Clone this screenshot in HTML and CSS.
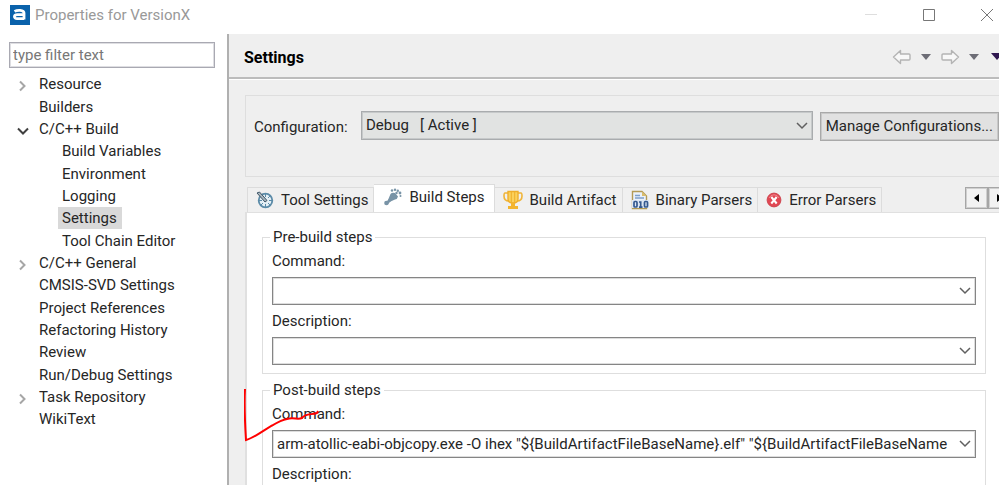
FILE: index.html
```html
<!DOCTYPE html>
<html lang="en">
<head>
<meta charset="utf-8">
<title>Properties for VersionX</title>
<link rel="stylesheet" href="styles.css">
</head>
<body>
<header class="titlebar">
  <svg class="app-icon" viewBox="0 0 20 20" aria-hidden="true">
    <rect width="20" height="20" fill="#0a62ab"/>
    <path d="M4.500 6.400C7 5 14 4.500 14 8V14.500M14 9.700H7.500C3.500 9.700 3.500 13.600 7 13.600H14" fill="none" stroke="#fff" stroke-width="2.800"/>
  </svg>
  <h1 class="window-title">Properties for VersionX</h1>
  <div class="window-buttons">
    <button type="button" class="window-button" aria-label="Minimize"><svg viewBox="0 0 14 14"><path d="M1 6.500H13" stroke="#dedede"/></svg></button>
    <button type="button" class="window-button" aria-label="Maximize"><svg viewBox="0 0 14 14"><path d="M1.500 1.500H12.500V12.500H1.500Z" fill="none" stroke="#777"/></svg></button>
    <button type="button" class="window-button" aria-label="Close"><svg viewBox="0 0 14 14"><path d="M1 1L13 13M13 1L1 13" stroke="#777"/></svg></button>
  </div>
</header>

<div class="dialog">
  <nav class="sidebar" aria-label="Property pages">
    <input class="filter" type="text" placeholder="type filter text" aria-label="Filter">
    <ul class="tree">
      <li class="node"><svg class="twisty" viewBox="0 0 12 12"><path d="M3 1.500L7.500 6L3 10.500"/></svg><a href="#">Resource</a></li>
      <li class="node"><a href="#">Builders</a></li>
      <li class="node"><svg class="twisty open" viewBox="0 0 12 12"><path d="M1 3.500L6 8.500L11 3.500"/></svg><a href="#">C/C++ Build</a></li>
      <li class="node child"><a href="#">Build Variables</a></li>
      <li class="node child"><a href="#">Environment</a></li>
      <li class="node child"><a href="#">Logging</a></li>
      <li class="node child"><a class="selected" href="#" aria-current="page">Settings</a></li>
      <li class="node child"><a href="#">Tool Chain Editor</a></li>
      <li class="node"><svg class="twisty" viewBox="0 0 12 12"><path d="M3 1.500L7.500 6L3 10.500"/></svg><a href="#">C/C++ General</a></li>
      <li class="node"><a href="#">CMSIS-SVD Settings</a></li>
      <li class="node"><a href="#">Project References</a></li>
      <li class="node"><a href="#">Refactoring History</a></li>
      <li class="node"><a href="#">Review</a></li>
      <li class="node"><a href="#">Run/Debug Settings</a></li>
      <li class="node"><svg class="twisty" viewBox="0 0 12 12"><path d="M3 1.500L7.500 6L3 10.500"/></svg><a href="#">Task Repository</a></li>
      <li class="node"><a href="#">WikiText</a></li>
    </ul>
  </nav>

  <main class="page">
    <div class="page-header">
      <h2 class="page-title">Settings</h2>
      <div class="history">
        <button type="button" class="tool" aria-label="Back"><svg width="20" height="16" viewBox="0 0 20 16"><path d="M1.500 8L8.500 1.500V5H17Q18 5 18 6V10Q18 11 17 11H8.500V14.500Z" fill="#f8f8f8" stroke="#b4b4b4" stroke-width="1.400" stroke-linejoin="round"/></svg></button>
        <button type="button" class="tool" aria-label="Back history"><svg width="10" height="6" viewBox="0 0 10 6"><path d="M0 0H10L5 6Z" fill="#6d6d76"/></svg></button>
        <button type="button" class="tool" aria-label="Forward"><svg width="20" height="16" viewBox="0 0 20 16"><path d="M18.500 8L11.500 1.500V5H3Q2 5 2 6V10Q2 11 3 11H11.500V14.500Z" fill="#f8f8f8" stroke="#b4b4b4" stroke-width="1.400" stroke-linejoin="round"/></svg></button>
        <button type="button" class="tool" aria-label="Forward history"><svg width="10" height="6" viewBox="0 0 10 6"><path d="M0 0H10L5 6Z" fill="#6d6d76"/></svg></button>
        <button type="button" class="tool view-menu" aria-label="View menu"><svg width="12" height="7" viewBox="0 0 12 7"><path d="M0 0H12L6 7Z" fill="#2f1750"/></svg></button>
      </div>
    </div>

    <div class="page-body">
      <section class="config">
        <label for="configuration">Configuration:</label>
        <div class="select-box">
          <select id="configuration"><option>Debug&nbsp;&nbsp; [ Active ]</option></select>
          <svg class="chevron" viewBox="0 0 12 8"><path d="M1 1L6 6L11 1"/></svg>
        </div>
        <button type="button" class="manage">Manage Configurations...</button>
      </section>

      <div class="tabs">
        <div class="tab-list" role="tablist">
          <button type="button" class="tab" role="tab">
            <svg class="tab-icon" viewBox="0 0 18 18"><circle cx="9.500" cy="9.500" r="6.800" fill="#e4eff5" stroke="#5b8ba8" stroke-width="1.800"/><path d="M9.500 3V6M9.500 13V16M13 9.500H16M3 9.500H6M12 7L14 5M12 12L14 14M7 12L5 14" stroke="#5b8ba8"/><path d="M1 2L3.500 1L11 9.500L9 11Z" fill="#a7b4bc" stroke="#3f5668"/></svg>
            Tool Settings</button>
          <button type="button" class="tab active" role="tab" aria-selected="true">
            <svg class="tab-icon" viewBox="0 0 18 18"><g fill="#7893a6"><path d="M4 12L6.500 6Q8 4 11 5L14 8.500Q13.500 11 11 11.500L5.500 14Z"/><circle cx="2.500" cy="15" r="2.300"/><path d="M2 14L5 11L7 13L4 16Z"/><circle cx="8" cy="2.500" r="1.200"/><circle cx="11" cy="1.700" r="1.200"/><circle cx="13.800" cy="2.700" r="1.200"/><circle cx="16" cy="5" r="1.400"/><circle cx="16.500" cy="8" r="1"/><circle cx="12.500" cy="5" r="1.200"/></g></svg>
            Build Steps</button>
          <button type="button" class="tab" role="tab">
            <svg class="tab-icon wide" viewBox="0 0 20 20"><path d="M5 3H2Q1 3 1 6Q1 11 6 11M15 3H18Q19 3 19 6Q19 11 14 11" fill="none" stroke="#f0b437" stroke-width="1.600"/><path d="M5 1.500H15V9Q15 13 10 13Q5 13 5 9Z" fill="#fbd15b" stroke="#efae2b" stroke-width="1.400"/><path d="M8.300 2V12M11.700 2V12" stroke="#efae2b"/><path d="M8 13H12V16H15V19H5V16H8Z" fill="#f3b52f"/></svg>
            Build Artifact</button>
          <button type="button" class="tab" role="tab">
            <svg class="tab-icon tall" viewBox="0 0 18 20"><path d="M1.500 18.500V1.500H11L15.500 6V18.500Z" fill="#eaf1fa" stroke="#b39a55" stroke-width="1.400"/><path d="M11 1.500V6H15.500Z" fill="#d9bd6d"/><path d="M4 5.500H9M4 8H13" stroke="#7d9fca" stroke-width="1.300"/><rect x="1" y="10" width="17" height="8" fill="#dce6f3"/><g fill="none" stroke="#35598f" stroke-width="1.700"><rect x="3" y="11.500" width="3" height="5.500" rx="1"/><path d="M8 12H9.700V17M8 17.200H11.500"/><rect x="13.500" y="11.500" width="3" height="5.500" rx="1"/></g></svg>
            Binary Parsers</button>
          <button type="button" class="tab" role="tab">
            <svg class="tab-icon small" viewBox="0 0 16 16"><circle cx="8" cy="8" r="6.900" fill="#e14753" stroke="#cf4650"/><path d="M3 6A5.500 5.500 0 0 1 13 6" fill="none" stroke="#ee8990"/><path d="M5.300 5L10.700 11.500M10.700 5L5.300 11.500" stroke="#fff" stroke-width="2"/></svg>
            Error Parsers</button>
          <div class="scrollers">
            <button type="button" class="scroller" aria-label="Scroll tabs left"><svg width="5" height="8" viewBox="0 0 5 8"><path d="M5 0V8L0 4Z"/></svg></button>
            <button type="button" class="scroller" aria-label="Scroll tabs right"><svg width="5" height="8" viewBox="0 0 5 8"><path d="M0 0V8L5 4Z"/></svg></button>
          </div>
        </div>

        <div class="tab-page" role="tabpanel">
          <fieldset class="group">
            <legend>Pre-build steps</legend>
            <label for="pre-command">Command:</label>
            <div class="combo"><input id="pre-command" type="text"><button type="button" aria-label="Show commands"><svg class="chevron" viewBox="0 0 12 8"><path d="M1 1L6 6L11 1"/></svg></button></div>
            <label for="pre-description">Description:</label>
            <div class="combo"><input id="pre-description" type="text"><button type="button" aria-label="Show descriptions"><svg class="chevron" viewBox="0 0 12 8"><path d="M1 1L6 6L11 1"/></svg></button></div>
          </fieldset>
          <fieldset class="group">
            <legend>Post-build steps</legend>
            <label for="post-command">Command:</label>
            <div class="combo"><input id="post-command" type="text" value="arm-atollic-eabi-objcopy.exe -O ihex &quot;${BuildArtifactFileBaseName}.elf&quot; &quot;${BuildArtifactFileBaseName"><button type="button" aria-label="Show commands"><svg class="chevron" viewBox="0 0 12 8"><path d="M1 1L6 6L11 1"/></svg></button></div>
            <label for="post-description">Description:</label>
            <div class="combo"><input id="post-description" type="text"><button type="button" aria-label="Show descriptions"><svg class="chevron" viewBox="0 0 12 8"><path d="M1 1L6 6L11 1"/></svg></button></div>
          </fieldset>
          <svg class="pen-mark" viewBox="0 0 76 54" aria-hidden="true"><path d="M1 1C0 18 1 36 2 52C14 49 30 33 43 31C49 29 54 32 58 30C61 25 68 27 73 25L74 23"/></svg>
        </div>
      </div>
    </div>
  </main>
</div>
</body>
</html>
```
FILE: styles.css
```css
* { box-sizing: border-box; }

body {
  margin: 0;
  height: 100vh;
  display: flex;
  flex-direction: column;
  overflow: hidden;
  background: #fff;
  color: #262626;
  font: 15px/20px Roboto, "Noto Sans", sans-serif;
}

button, input, select { font: inherit; color: inherit; }
button { padding: 0; border: 0; background: none; }
h1, h2, ul, fieldset { margin: 0; padding: 0; }
svg { display: block; flex: none; }

/* Title bar */
.titlebar {
  display: flex;
  align-items: center;
  height: 34px;
  padding: 0 5px 5px 10px;
  flex: none;
}
.app-icon { width: 20px; height: 20px; }
.window-title { margin-left: 5px; font-size: 15px; font-weight: 400; color: #999; }
.window-buttons { display: flex; gap: 44px; margin-left: auto; }
.window-button svg { width: 14px; height: 14px; }

.dialog { display: flex; flex: 1; min-height: 0; }

/* Page tree */
.sidebar { width: 229px; flex: none; padding: 8px 12px 0 9px; border-right: 2px solid #b0b0b0; }
.filter {
  display: block;
  width: 100%;
  height: 26px;
  padding: 0 3px 1px;
  border: 1px solid #a9a9b2;
  box-shadow: inset 0 0 0 1px #dedee2;
  background: #fff;
}
.filter::placeholder { color: #777; opacity: 1; }
.tree { list-style: none; margin-top: 5px; }
.node { display: flex; align-items: center; height: 22px; padding-left: 26px; }
.node:nth-child(3n + 2) { height: 23px; }
.node.child { padding-left: 49px; }
.node a { padding: 0 5px 0 4px; line-height: 22px; color: inherit; text-decoration: none; }
.node a.selected { background: #d9d9d9; }
.twisty { width: 12px; height: 12px; margin: 3px 6px 0 -18px; fill: none; stroke: #a6a6a6; stroke-width: 2; }
.twisty.open { stroke: #404040; }

/* Settings page */
.page { flex: 1; min-width: 0; display: flex; flex-direction: column; background: #efefef; }
.page-header {
  display: flex;
  align-items: center;
  height: 45px;
  flex: none;
  padding-left: 15px;
  border-bottom: 2px solid #bcbcbc;
  overflow: hidden;
}
.page-title { font-size: 16px; font-weight: 700; line-height: 20px; color: #000; padding-top: 4px; }
.history { display: flex; align-items: center; gap: 9px; margin: 2px -4px 0 auto; }
.view-menu { margin-left: 3px; }

.page-body { flex: 1; min-height: 0; display: flex; flex-direction: column; padding: 15px 0 0 16px; border-top: 1px solid #fff; }
.config {
  display: flex;
  align-items: flex-start;
  height: 82px;
  flex: none;
  padding: 15px 0 0 8px;
  border: 1px solid #dedede;
  border-right: 0;
  white-space: nowrap;
}
.config label { width: 107px; flex: none; line-height: 32px; }
.select-box { position: relative; flex: 1; }
.select-box select {
  display: block;
  width: 100%;
  height: 29px;
  padding: 0 4px 1px;
  appearance: none;
  border: 1px solid #a9acae;
  box-shadow: inset 0 0 0 1px #c6c9ca;
  border-radius: 0;
  background: #e1e3e2;
}
.chevron { width: 12px; height: 8px; fill: none; stroke: #606060; stroke-width: 1.5; }
.select-box .chevron { position: absolute; right: 5px; top: 11px; pointer-events: none; }
.manage {
  height: 29px;
  margin: 1px 0 0 7px;
  padding: 0 5px 1px;
  border: 1px solid #a9a9a9;
  box-shadow: inset 0 0 0 1px #c8c8c8;
  background: #e1e1e1;
}

/* Tabs */
.tabs { flex: 1; min-height: 0; display: flex; flex-direction: column; margin-top: 7px; }
.tab-list { display: flex; align-items: flex-end; height: 28px; flex: none; padding-left: 2px; overflow: hidden; white-space: nowrap; }
.tab {
  display: flex;
  align-items: center;
  gap: 7px;
  height: 25px;
  flex: none;
  padding: 0 5px 0 8px;
  border: 1px solid #dcdcdc;
  border-width: 1px 1px 0 0;
  background: #f0f0f0;
}
.tab:first-child { border-left-width: 1px; }
.tab.active { height: 28px; padding: 0 9px 3px 10px; background: #fff; }
.tab-icon { width: 18px; height: 18px; }
.tab-icon.wide { width: 20px; height: 20px; }
.tab-icon.tall { height: 20px; }
.tab-icon.small { width: 16px; height: 16px; }
.scrollers { display: flex; flex: none; align-self: flex-start; margin: 3px -12px 0 auto; }
.scroller { display: grid; place-items: center; width: 23px; height: 22px; border: 1px solid #a6a6a6; box-shadow: inset 0 0 0 1px #cfcfcf; background: #f2f2f2; }

.tab-page {
  position: relative;
  flex: 1;
  min-height: 0;
  padding: 14px 13px 0 15px;
  border: solid #e0e0e0;
  border-width: 1px 0 0 2px;
  background: #fff;
}
.group { min-width: 0; padding: 0 9px 8px; border: 1px solid #dedede; margin-bottom: 6px; }
.group legend { margin-left: -2px; padding: 0 3px; line-height: 20px; }
.group label { display: block; line-height: 20px; margin: 4px 0 6px; }
.group .combo + label { margin-top: 6px; }
.combo { display: flex; height: 28px; border: 1px solid #858585; box-shadow: inset 0 0 0 1px #ddd; background: #fff; }
.combo input { flex: 1; min-width: 0; padding: 0 0 0 4px; border: 0; outline: 0; background: none; }
.combo button { width: 20px; display: grid; place-items: center; }
.pen-mark { position: absolute; left: -3px; top: 175px; width: 76px; height: 54px; fill: none; stroke: #f00; stroke-width: 2; pointer-events: none; }
```
